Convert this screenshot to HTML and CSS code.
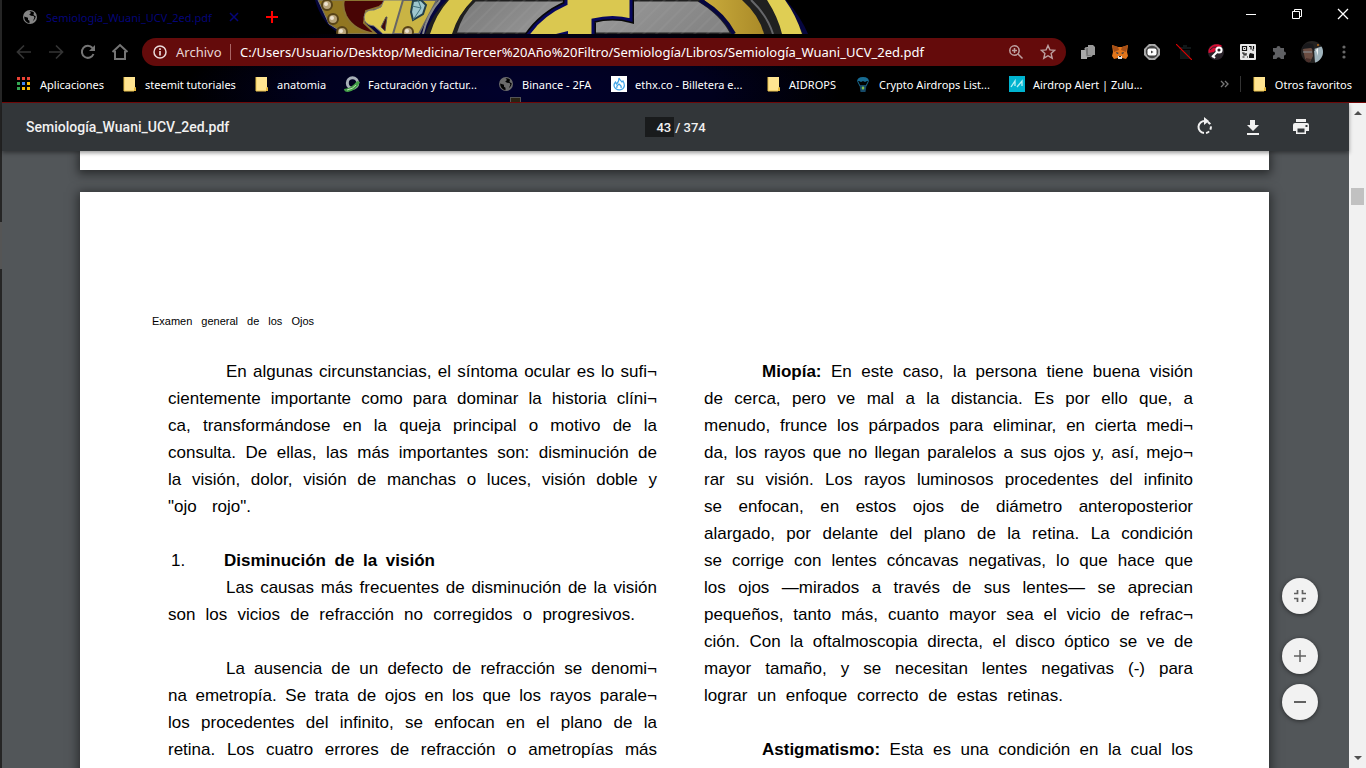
FILE: index.html
```html
<!DOCTYPE html>
<html lang="es">
<head>
<meta charset="utf-8">
<title>Semiología_Wuani_UCV_2ed.pdf</title>
<link rel="stylesheet" href="styles.css">
</head>
<body>
<svg class="defs" aria-hidden="true">
  <defs>
    <symbol id="globe" viewBox="0 0 16 16"><circle cx="8" cy="8" r="7" fill="currentColor"/><path d="M2.200 7.500l3.800 1.200v2l1.500 1v2.600A6.400 6.400 0 0 1 2.200 7.500zM7.500 2.200L9 4 7.200 5.500l1.800 1.300 2.600.2.800 1.800-1.600 3.400A6.400 6.400 0 0 0 13.800 7.500L11.500 6l.5-2.500A6.400 6.400 0 0 0 7.500 2.200z" fill="#000"/></symbol>
    <symbol id="folder" viewBox="0 0 14 16"><path d="M1 1h11v10.500h1V15H1z" fill="#ffe491"/><path d="M11 15v-3.500h2V15z" fill="#e8b93c"/><path d="M1 1v14h10" fill="none" stroke="#e9c24d"/></symbol>
  </defs>
</svg>
<div class="window">
  <header class="browser">
    <div class="tabstrip">
      <svg class="theme-art" viewBox="310 0 500 34" aria-hidden="true">
        <defs>
          <linearGradient id="steel" x2="1" y2=".15"><stop offset="0" stop-color="#777"/><stop offset=".5" stop-color="#999"/><stop offset="1" stop-color="#858585"/></linearGradient>
          <pattern id="brush" width="9" height="9" patternUnits="userSpaceOnUse" patternTransform="rotate(45)"><path d="M2 0v9" stroke="#aaa" stroke-width="1" opacity=".25"/></pattern>
          <linearGradient id="gold"><stop offset="0" stop-color="#c9ab3c"/><stop offset="1" stop-color="#aa8a28"/></linearGradient>
        </defs>
        <path d="M315 0h150l-32 34h-93Q322 24 315 0z" fill="#05053a"/>
        <path d="M318 0h30q-4 20 28 34h-31l-16-10z" fill="#917621" stroke="#777"/>
        <path d="M344 0h44l-9 7-13 4-2 12 12 11q-22-3-30-18-4-9-2-16z" fill="#480505" stroke="#8b7532" stroke-width="2"/>
        <path d="M384 0h34l-18 34h-17l-9-8q-10-1-10-9 1-8 10-7l7-3z" fill="#dcca50" stroke="#777"/>
        <path d="M386 17l-5 10 4 4 2-14z" fill="#400b0b" stroke="#555"/>
        <path d="M403 0h34l-18 34h-26z" fill="#c9b444" stroke="#666" stroke-width="2"/>
        <path d="M413 1l8-1 5 5-3 9-10 6-2-8z" fill="#9ec7cf" stroke="#233f4a" stroke-width="2"/><path d="M418 0l3 8-8 12M421 8l-9-2" stroke="#41727d" fill="none"/>
        <g fill="#b8a47a" stroke="#574317" stroke-width="2"><circle cx="327" cy="5" r="5"/><circle cx="333" cy="19" r="5"/><circle cx="342" cy="32" r="5"/><circle cx="408" cy="32" r="5"/></g>
        <g fill="#eee3cf"><circle cx="326" cy="4" r="2"/><circle cx="332" cy="18" r="2"/><circle cx="341" cy="31" r="2"/><circle cx="407" cy="31" r="2"/></g>
        <path d="M443 0h343q15 17 22 34H420q8-20 23-34z" fill="#06063f"/>
        <path d="M447 0h332q17 17 24 34H425q8-21 22-34z" fill="#202020"/>
        <path d="M767 0h18q11 15 17 34h-20q-4-17-15-34z" fill="#dfce54"/>
        <path d="M751 0q16 15 22 34" fill="none" stroke="#66676a" stroke-width="2"/>
        <path d="M449 0h24q-15 14-21 34h-22q6-20 19-34z" fill="#d8c64d"/>
        <path d="M440 0q-13 15-17 34" fill="none" stroke="#888" stroke-width="2"/>
        <path d="M475 0h223q24 14 34 34H455q6-21 20-34z" fill="url(#steel)" stroke="#202020" stroke-width="3"/>
        <path d="M478 0h218q24 14 34 34H457q6-21 21-34z" fill="url(#brush)"/>
        <path d="M704 0h38q17 15 22 34h-30q-11-20-30-34z" fill="url(#gold)"/>
        <path d="M700 0q23 13 34 34" fill="none" stroke="#06063f" stroke-width="4"/>
        <path d="M527 36Q541 15 566 4V-3h65v23q-18-5-38 0v16z" fill="#d5c34c" stroke="#080808" stroke-width="6"/>
        <path d="M527 36Q541 15 566 4V-3h65v23q-18-5-38 0v16z" fill="#dac850" stroke="#07075e" stroke-width="3"/>
        <path d="M556 34l12-3v3z" fill="#07075e"/>
      </svg>
      <div class="tab">
        <svg class="tab-icon" width="16" height="16"><use href="#globe"/></svg>
        <span class="tab-title">Semiología_Wuani_UCV_2ed.pdf</span>
        <button class="tab-close" aria-label="Cerrar pestaña"><svg width="10" height="10"><path d="M1 1l8 8M9 1L1 9" stroke="currentColor" stroke-width="1.500"/></svg></button>
      </div>
      <button class="new-tab" aria-label="Nueva pestaña"><svg width="12" height="12"><path d="M6 0v12M0 6h12" stroke="red" stroke-width="2"/></svg></button>
      <div class="window-controls">
        <button aria-label="Minimizar"><svg width="12" height="12"><path d="M1 6.500h10" stroke="#fff"/></svg></button>
        <button aria-label="Restaurar"><svg width="12" height="12"><path d="M1.500 3.500h7v7h-7zM3.500 3V1.500h7v7H9" fill="none" stroke="#fff"/></svg></button>
        <button aria-label="Cerrar"><svg width="12" height="12"><path d="M1 1l10 10M11 1L1 11" stroke="#fff" stroke-width="1.300"/></svg></button>
      </div>
    </div>

    <div class="navbar">
      <div class="nav-buttons">
        <button class="dim" aria-label="Atrás"><svg width="16" height="16"><path d="M15 8H2M8 1.500L1.500 8 8 14.500" fill="none" stroke="currentColor" stroke-width="1.700"/></svg></button>
        <button class="dim" aria-label="Adelante"><svg width="16" height="16"><path d="M1 8h13M8 1.500L14.500 8 8 14.500" fill="none" stroke="currentColor" stroke-width="1.700"/></svg></button>
        <button aria-label="Recargar"><svg width="16" height="16"><path d="M13.500 10A6 6 0 1 1 12.500 4" fill="none" stroke="currentColor" stroke-width="2"/><path d="M15 1v6H9z" fill="currentColor"/></svg></button>
        <button aria-label="Inicio"><svg width="18" height="18"><path d="M1.500 9L9 2l7.500 7M4 8v8h10V8" fill="none" stroke="currentColor" stroke-width="2"/></svg></button>
      </div>
      <div class="omnibox">
        <svg width="16" height="16"><circle cx="8" cy="8" r="6" fill="none" stroke="#eadada" stroke-width="1.500"/><path d="M8 7v4.500M8 4.300v1.600" stroke="#eadada" stroke-width="1.700"/></svg>
        <span class="scheme">Archivo</span>
        <input class="url" aria-label="Dirección" value="C:/Users/Usuario/Desktop/Medicina/Tercer%20Año%20Filtro/Semiología/Libros/Semiología_Wuani_UCV_2ed.pdf">
        <button aria-label="Zoom"><svg width="16" height="16"><circle cx="6.500" cy="6.500" r="4.700" fill="none" stroke="currentColor" stroke-width="1.500"/><path d="M10 10l4.500 4.500M6.500 4v5M4 6.500h5" stroke="currentColor" stroke-width="1.500"/></svg></button>
        <button aria-label="Favorito"><svg width="16" height="16"><path d="M8 1.500l1.900 4.400 4.800.4-3.600 3.200 1.100 4.700L8 11.700l-4.200 2.500 1.100-4.700L1.300 6.300l4.800-.4z" fill="none" stroke="currentColor" stroke-width="1.400"/></svg></button>
      </div>
      <div class="extensions">
        <button aria-label="Copiar"><svg width="16" height="16"><path d="M1 6h6v9H1z" fill="#aaa"/><path d="M5 4l6-1 1 9-6 1z" fill="#777" stroke="#aaa"/><path d="M8 1h5l2 2v8H8z" fill="#999"/></svg></button>
        <button aria-label="MetaMask"><svg width="16" height="16"><path d="M0 1l6 2h4l6-2-1 7 1 4-2 3-4-1-1 1H7l-1-1-4 1-2-3 1-4z" fill="#e2761b"/><path d="M0 1l6 2 1 3-5 2zM16 1l-6 2-1 3 5 2z" fill="#a64f17"/><path d="M4 8l3 1-2 1zM12 8L9 9l2 1z" fill="#233447"/><path d="M6 12h4v3H6z" fill="#ddd"/><path d="M7 12h2v1H7z" fill="#222"/></svg></button>
        <button aria-label="Vídeo"><svg width="16" height="16"><path d="M5 0h6l5 5v6l-5 5H5l-5-5V5z" fill="#aaa"/><circle cx="8" cy="8" r="6.200" fill="#444"/><rect x="3.500" y="4.500" width="9" height="7" rx="2" fill="#fff"/><path d="M7 6.500v3L9.500 8z" fill="#444"/></svg></button>
        <button aria-label="Borrar"><svg width="16" height="16"><path d="M3 3h12v2H3zM4 6h10v9H4zM7 1h4v2H7z" fill="#101718"/><path d="M0 0l16 16" stroke="#d00" stroke-width="1.200"/></svg></button>
        <button aria-label="Clave"><svg width="16" height="16"><circle cx="8" cy="8" r="8" fill="#292229"/><path d="M.5 6Q3 0 10 .3q4 .7 4 2L9 4 6 8 .5 9z" fill="#d90b32"/><path d="M2 6q3-4 7-3" stroke="#292229" fill="none"/><circle cx="11" cy="6" r="2.600" fill="none" stroke="#fff" stroke-width="2"/><path d="M9 8l-5 5M5 12l2 2" stroke="#fff" stroke-width="2"/></svg></button>
        <button aria-label="Código QR"><svg width="16" height="16"><rect width="16" height="16" rx="1" fill="#e8e8e8"/><path d="M2.500 2.500h4v4h-4zM9 2.500h2v3M12 6h2M13.500 2v3M2 9h2v2h2V9M2.500 13h2M7 13h1" fill="none" stroke="#111" stroke-width="1.200"/><path d="M10 9l4 1v4H9v-3zM4 4h1v1H4z" fill="#111"/></svg></button>
        <button aria-label="Extensiones"><svg width="16" height="16"><path d="M1 4h3.500a2 2 0 1 1 4 0H12v3.500a2 2 0 1 1 0 4V15H8.800a2.200 2.200 0 0 0-4.300 0H1v-3.500a2 2 0 0 0 0-4z" fill="#5f6063"/></svg></button>
        <button class="profile" aria-label="Perfil"><svg width="22" height="22"><defs><clipPath id="face"><circle cx="11" cy="11" r="11"/></clipPath></defs><g clip-path="url(#face)"><path d="M0 0h22v22H0z" fill="#252322"/><path d="M13 8l9-3v17h-8z" fill="#a0b4bd"/><path d="M15 9l2-2v8z" fill="#eef3f4"/><path d="M2 8q5-4 9-1l1 8-3 6-5-3z" fill="#6b4d42"/><path d="M2 11h9" stroke="#8c9498"/><path d="M1 8Q3 0 12 3l2 7-4-3z" fill="#19191c"/><path d="M5 17l5 1-2 4H4z" fill="#4a302b"/><circle cx="17" cy="4" r="1" fill="#b46a19"/></g></svg></button>
        <button class="menu" aria-label="Menú"><svg width="4" height="14" fill="#686868"><circle cx="2" cy="2" r="1.600"/><circle cx="2" cy="7" r="1.600"/><circle cx="2" cy="12" r="1.600"/></svg></button>
      </div>
    </div>

    <nav class="bookmarks" aria-label="Favoritos">
      <a href="#" class="bm bm-apps"><svg width="14" height="14"><path d="M0 0h3v3H0zM5 0h3v3H5zM10 0h3v3h-3z" fill="#ea4335"/><path d="M0 5h3v3H0zM0 10h3v3H0z" fill="#34a853"/><path d="M5 5h3v3H5z" fill="#4285f4"/><path d="M10 5h3v3h-3zM10 10h3v3h-3zM5 10h3v3H5z" fill="#fbbc05"/></svg><span>Aplicaciones</span></a>
      <a href="#" class="bm bm-steemit"><svg width="14" height="16"><use href="#folder"/></svg><span>steemit tutoriales</span></a>
      <a href="#" class="bm bm-anatomia"><svg width="14" height="16"><use href="#folder"/></svg><span>anatomia</span></a>
      <a href="#" class="bm bm-factura"><svg width="16" height="16"><circle cx="8.500" cy="7" r="5.200" fill="none" stroke="#a8b0b8" stroke-width="3"/><path d="M0 13q8-1 13-8l3 1Q13 14 4 16q-4 0-4-3z" fill="#43a047"/><path d="M3 14q6-1 9-5" stroke="#bde0b5" fill="none"/></svg><span>Facturación y factur...</span></a>
      <a href="#" class="bm bm-binance"><svg class="globe-dim" width="16" height="16"><use href="#globe"/></svg><span>Binance - 2FA</span></a>
      <a href="#" class="bm bm-ethx"><svg width="16" height="16"><path d="M0 0h16v16H0z" fill="#fff"/><path d="M8 2q1 2 3 4l1-1q3 5-.5 8Q8 15 4.500 12.500 1.500 9.500 4.500 6l1 2Q8 6 8 2zM6 12q-1-2 2-4 3 2 2 4" fill="none" stroke="#42a5e8" stroke-width="1.200"/></svg><span>ethx.co - Billetera e...</span></a>
      <a href="#" class="bm bm-aidrops"><svg width="14" height="16"><use href="#folder"/></svg><span>AIDROPS</span></a>
      <a href="#" class="bm bm-crypto"><svg width="16" height="16"><path d="M2 6q0-5 6-5t6 5l-2-1-2 1-2-1-2 1-2-1z" fill="#176b92"/><path d="M3 6l2 4M13 6l-2 4" stroke="#176b92"/><path d="M4.500 9h7l-1 7h-5z" fill="#164a68"/><path d="M8 10l1.500 2L8 14l-1.500-2z" fill="#8bc34a"/></svg><span>Crypto Airdrops List...</span></a>
      <a href="#" class="bm bm-alert"><svg width="16" height="16"><path d="M0 0h16v16H0z" fill="#00b4d0"/><path d="M2 11l4-6v5M8 11l5-6v5" fill="none" stroke="#b9f2f5" stroke-width="1.300"/></svg><span>Airdrop Alert | Zulu...</span></a>
      <button class="overflow" aria-label="Más favoritos"><svg width="9" height="8"><path d="M1 1l3 3-3 3M5 1l3 3-3 3" fill="none" stroke="#777" stroke-width="1.300"/></svg></button>
      <a href="#" class="bm bm-other"><svg width="14" height="16"><use href="#folder"/></svg><span>Otros favoritos</span></a>
    </nav>
  </header>

  <main class="viewer">
    <div class="pdf-area">
      <div class="pdf-toolbar">
        <h1 class="pdf-title">Semiología_Wuani_UCV_2ed.pdf</h1>
        <div class="pager"><input class="page-number" aria-label="Página" value="43"><span>/ 374</span></div>
        <div class="pdf-actions">
          <button aria-label="Girar"><svg width="18" height="20"><path d="M9 4A6 6 0 0 0 8 16" fill="none" stroke="currentColor" stroke-width="2"/><path d="M10 16A6 6 0 0 0 11 4.500" fill="none" stroke="currentColor" stroke-width="2" stroke-dasharray="3.500 2"/><path d="M8 0l5 4-5 4z" fill="currentColor"/></svg></button>
          <button aria-label="Descargar"><svg width="14" height="18"><path d="M4 2h5v5h4l-6 6-6-6h3zM1 15h12v2H1z" fill="currentColor"/></svg></button>
          <button aria-label="Imprimir"><svg width="18" height="18"><path d="M4 1h10v3H4zM3 5h12q2 0 2 2v6h-3v-3H4v3H1V7q0-2 2-2z" fill="currentColor"/><path d="M4 10h10v6H4z" fill="currentColor"/><path d="M5.500 10.500h7v4h-7z" fill="#323639"/><path d="M13.500 7h2v2h-2z" fill="#323639"/></svg></button>
        </div>
      </div>
      <div class="pages">
        <div class="page page-previous"></div>
        <article class="page page-current">
          <p class="running-head">Examen general de los Ojos</p>
          <div class="columns">
            <div class="column">
              <p class="indented"><span>En algunas circunstancias, el síntoma ocular es lo sufi¬</span><span>cientemente importante como para dominar la historia clíni¬</span><span>ca, transformándose en la queja principal o motivo de la</span><span>consulta. De ellas, las más importantes son: disminución de</span><span>la visión, dolor, visión de manchas o luces, visión doble y</span><span class="short-quote">"ojo rojo".</span></p>
              <h2><span class="item-number">1.</span><span class="item-title">Disminución de la visión</span></h2>
              <p class="indented"><span>Las causas más frecuentes de disminución de la visión</span><span class="short-vices">son los vicios de refracción no corregidos o progresivos.</span></p>
              <p class="indented"><span>La ausencia de un defecto de refracción se denomi¬</span><span>na emetropía. Se trata de ojos en los que los rayos parale¬</span><span>los procedentes del infinito, se enfocan en el plano de la</span><span>retina. Los cuatro errores de refracción o ametropías más</span></p>
            </div>
            <div class="column">
              <p class="indented"><span><b>Miopía:</b> En este caso, la persona tiene buena visión</span><span>de cerca, pero ve mal a la distancia. Es por ello que, a</span><span>menudo, frunce los párpados para eliminar, en cierta medi¬</span><span>da, los rayos que no llegan paralelos a sus ojos y, así, mejo¬</span><span>rar su visión. Los rayos luminosos procedentes del infinito</span><span>se enfocan, en estos ojos de diámetro anteroposterior</span><span>alargado, por delante del plano de la retina. La condición</span><span>se corrige con lentes cóncavas negativas, lo que hace que</span><span>los ojos —mirados a través de sus lentes— se aprecian</span><span>pequeños, tanto más, cuanto mayor sea el vicio de refrac¬</span><span>ción. Con la oftalmoscopia directa, el disco óptico se ve de</span><span>mayor tamaño, y se necesitan lentes negativas (-) para</span><span class="short-retinas">lograr un enfoque correcto de estas retinas.</span></p>
              <p class="indented"><span><b>Astigmatismo:</b> Esta es una condición en la cual los</span></p>
            </div>
          </div>
        </article>
      </div>
      <div class="zoom-controls">
        <button class="fit" aria-label="Ajustar a la página"><svg width="14" height="14"><path d="M1 4.500h3.500V1M9.500 1v3.500H13M1 9.500h3.500V13M9.500 13V9.500H13" fill="none" stroke="#616161" stroke-width="1.700"/></svg></button>
        <button aria-label="Acercar"><svg width="12" height="12"><path d="M6 0v12M0 6h12" stroke="#616161" stroke-width="1.500"/></svg></button>
        <button aria-label="Alejar"><svg width="12" height="12"><path d="M0 6h12" stroke="#616161" stroke-width="2"/></svg></button>
      </div>
    </div>
    <div class="scrollbar" aria-hidden="true">
      <svg width="8" height="5"><path d="M0 5l4-4 4 4z" fill="#505050"/></svg>
      <div class="track"><div class="thumb"></div></div>
      <svg width="8" height="5"><path d="M0 0l4 4 4-4z" fill="#505050"/></svg>
    </div>
  </main>
</div>
</body>
</html>
```
FILE: styles.css
```css
* { box-sizing: border-box; }
html, body { height: 100%; }
body { margin: 0; background: linear-gradient(#252525 222px, #555 222px 269px, #252525 269px); overflow: hidden; font-family: "Noto Sans", "Open Sans", sans-serif; }
button { display: flex; align-items: center; justify-content: center; padding: 0; border: 0; background: none; color: inherit; }
a { color: inherit; text-decoration: none; }
svg { display: block; flex: none; }
p, h1, h2 { margin: 0; }
.defs { position: absolute; width: 0; height: 0; }

.window { display: flex; flex-direction: column; height: 100vh; margin-left: 2px; }
.browser { position: relative; flex: none; background: radial-gradient(ellipse 330px 80px at 510px 92px, #01012c 0%, #01011e 60%, transparent 100%), #000; color: #fff; border-bottom: 1px solid #720909; }
.browser::after { content: ""; position: absolute; left: 508px; bottom: 0; width: 9px; height: 4px; border: 1px solid #555; border-bottom: 0; background: #2a2415; }

/* tab strip */
.tabstrip { position: relative; display: flex; align-items: center; height: 34px; background: #000; }
.theme-art { position: absolute; left: 308px; top: 0; width: 500px; height: 34px; }
.tab { display: flex; align-items: center; width: 252px; height: 34px; padding-left: 20px; color: #050578; font-size: 11px; }
.tab-icon { color: #858585; }
.tab-title { width: 183px; margin-left: 8px; white-space: nowrap; overflow: hidden; }
.new-tab { width: 36px; height: 28px; }
.window-controls { display: flex; margin-left: auto; margin-bottom: 6px; }
.window-controls button { width: 46px; height: 28px; }

/* navigation */
.navbar { display: flex; align-items: center; height: 36px; padding-right: 14px; }
.nav-buttons { display: flex; width: 140px; padding-left: 6px; color: #757575; }
.nav-buttons button { width: 32px; height: 28px; }
.nav-buttons .dim { color: #343434; }
.omnibox { display: flex; flex: 1; align-items: center; height: 28px; padding: 0 10px; border-radius: 14px; background: #640b0b; color: #bda0a0; font-size: 13px; }
.scheme { width: 46px; margin-left: 8px; color: #e8d5d5; }
.url { flex: 1; min-width: 0; height: 16px; margin-left: 8px; padding: 0 0 0 9px; border: 0; border-left: 1px solid #a66; background: none; color: #fff; font: inherit; }
.omnibox button { width: 16px; height: 16px; margin-left: 16px; }
.extensions { display: flex; align-items: center; gap: 16px; padding-left: 14px; }
.extensions button { width: 16px; height: 24px; }
.extensions .profile svg { margin: 0 -3px; }
.extensions .menu { width: 16px; }

/* bookmarks */
.bookmarks { display: flex; align-items: center; height: 32px; padding: 0 14px 4px 15px; font-size: 11px; white-space: nowrap; }
.bm { display: flex; align-items: center; gap: 8px; }
.bm-apps { width: 106px; gap: 9px; }
.bm-steemit { width: 132px; }
.bm-anatomia { width: 89px; }
.bm-factura { width: 154px; }
.bm-binance { width: 113px; }
.bm-ethx { width: 156px; }
.bm-aidrops { width: 88px; }
.bm-crypto { width: 154px; }
.globe-dim { color: #6a6a6a; }
.overflow { width: 16px; height: 16px; margin-left: auto; margin-right: 7px; }
.bm-other { height: 16px; padding-left: 12px; border-left: 1px solid #333; }

/* viewer */
.viewer { display: flex; flex: 1; min-height: 0; }
.pdf-area { position: relative; display: flex; flex: 1; flex-direction: column; min-width: 0; background: #525659; }
.pdf-toolbar { display: grid; grid-template-columns: 1fr auto 1fr; align-items: center; flex: none; z-index: 1; height: 48px; padding: 0 24px; background: #323639; color: #f1f1f1; font: 500 13px Roboto, sans-serif; box-shadow: 0 2px 4px rgba(0, 0, 0, .4); }
.pdf-title { font: 500 14px Roboto, sans-serif; }
.pager { display: flex; align-items: center; gap: 1px; }
.page-number { width: 29px; height: 20px; padding: 0 3px 0 0; border: 0; background: #191b1c; color: inherit; font: inherit; text-align: right; }
.pdf-actions { display: flex; justify-content: flex-end; gap: 16px; padding-right: 8px; }
.pdf-actions button { width: 32px; height: 32px; }
.pages { flex: 1; min-height: 0; padding: 0 80px 0 78px; overflow: hidden; }
.page { background: #fff; box-shadow: 0 2px 10px 2px rgba(0, 0, 0, .5); }
.page-previous { height: 19px; margin-bottom: 22px; }
.page-current { min-height: 100%; padding: 122px 76px 0 72px; color: #000; font-family: "Liberation Sans", Arial, sans-serif; }
.running-head { width: 162px; font-size: 11px; line-height: 14px; text-align-last: justify; }
.columns { display: grid; grid-template-columns: 1fr 1fr; gap: 47px; margin-top: 30px; padding-left: 16px; font-size: 17px; line-height: 27px; }
.column p { margin-bottom: 27px; }
.column p > span { display: block; white-space: nowrap; text-align-last: justify; }
.column .indented > span:first-child { padding-left: 58px; }
.column .short-quote { width: 83px; }
.column .short-vices { width: 467px; }
.column .short-retinas { width: 359px; }
.column h2 { display: flex; padding-left: 3px; font-size: 17px; line-height: 27px; }
.item-number { width: 53px; font-weight: 400; }
.item-title { width: 211px; text-align-last: justify; }

/* floating buttons */
.zoom-controls { position: absolute; right: 31px; bottom: 48px; display: flex; flex-direction: column; gap: 10px; }
.zoom-controls button { width: 36px; height: 36px; border-radius: 50%; background: #f2f2f2; box-shadow: 0 1px 4px rgba(0, 0, 0, .5); }
.zoom-controls .fit { margin-bottom: 14px; }

.scrollbar { display: flex; flex-direction: column; align-items: center; width: 17px; padding: 7px 0; background: #f1f1f1; }
.track { flex: 1; width: 13px; padding-top: 73px; }
.thumb { height: 17px; background: #c1c1c1; }
```
